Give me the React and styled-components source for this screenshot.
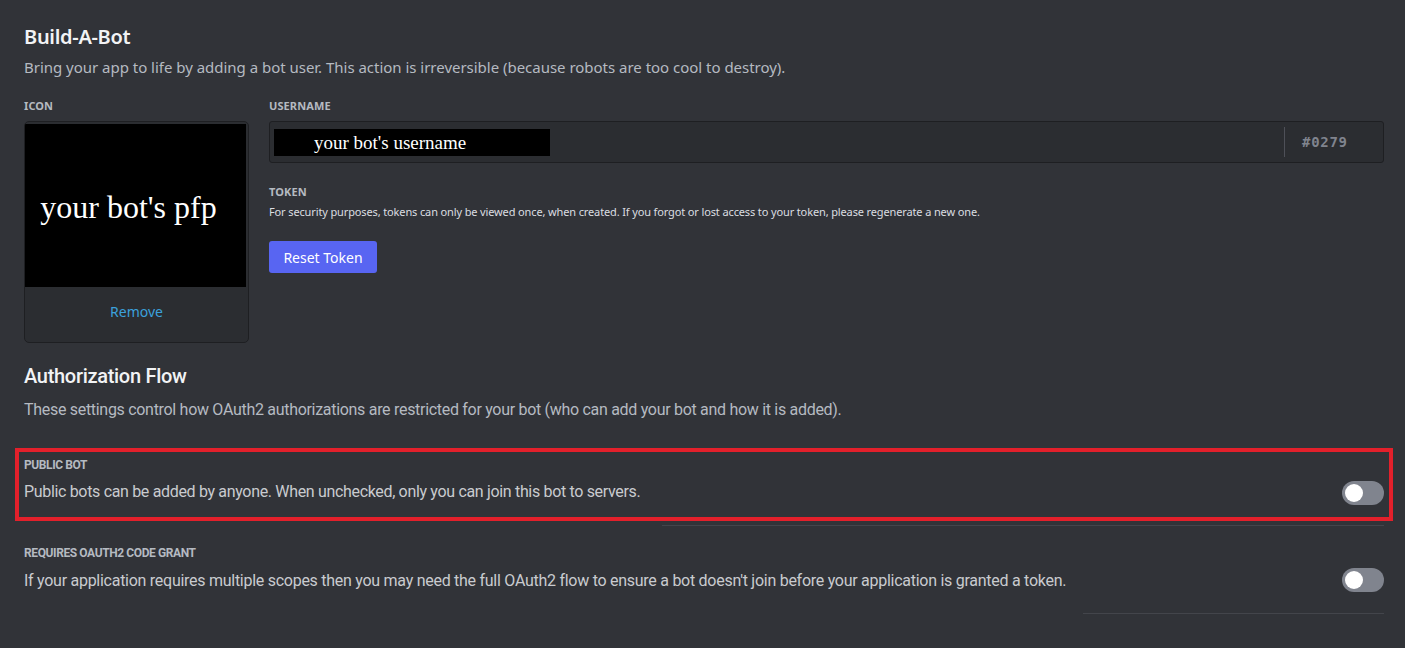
import React from "react";
import styled, { createGlobalStyle } from "styled-components";

const Global = createGlobalStyle`
  html, body { margin: 0; padding: 0; background: #313338; }
  body { font-family: "Noto Sans", sans-serif; -webkit-font-smoothing: antialiased; }
  #root { min-height: 648px; background: #313338; }
`;

const Page = styled.div`
  padding: 25px 21px 0 24px;
  color: #b5bac1;
  overflow: hidden;
  height: 648px;
  box-sizing: border-box;
`;

const Title = styled.h2`
  margin: 0;
  font-family: ${(p) => (p.$narrow ? `"Roboto", sans-serif` : `"Noto Sans", sans-serif`)};
  font-size: 20px;
  line-height: 24px;
  font-weight: ${(p) => (p.$narrow ? 500 : 600)};
  color: #f2f3f5;
  letter-spacing: -0.3px;
`;

const Sub = styled.p`
  margin: ${(p) => p.$m || "8px 0 0"};
  font-family: ${(p) => (p.$narrow ? `"Roboto", sans-serif` : `"Noto Sans", sans-serif`)};
  font-size: ${(p) => (p.$narrow ? "16px" : "15px")};
  line-height: 20px;
  color: #b5bac1;
  letter-spacing: ${(p) => (p.$narrow ? "-0.3px" : "-0.02px")};
`;

const Grid = styled.div`
  display: grid;
  grid-template-columns: 225px 1fr;
  column-gap: 20px;
  margin-top: 21px;
`;

const Col = styled.div`
  display: flex;
  flex-direction: column;
`;

const Label = styled.div`
  font-family: ${(p) => (p.$narrow ? `"Roboto", sans-serif` : `"Noto Sans", sans-serif`)};
  font-size: ${(p) => p.$size || "11px"};
  line-height: 16px;
  font-weight: 700;
  text-transform: uppercase;
  color: #b5bac1;
  letter-spacing: ${(p) => (p.$narrow ? "-0.4px" : "0.1px")};
  margin-top: ${(p) => p.$mt || "0"};
  margin-bottom: ${(p) => p.$mb || "7px"};
`;

const IconCard = styled.div`
  width: 225px;
  height: 222px;
  box-sizing: border-box;
  border: 1px solid #1e1f22;
  border-radius: 5px;
  background: #2b2d31;
  display: flex;
  flex-direction: column;
  overflow: hidden;
`;

const Pfp = styled.div`
  height: 163px;
  margin: 2px 2px 0 0;
  padding-right: 14px;
  padding-top: 4px;
  box-sizing: border-box;
  background: #000;
  display: flex;
  align-items: center;
  justify-content: center;
  font-family: "Liberation Serif", serif;
  font-size: 32px;
  color: #fff;
`;

const RemoveArea = styled.div`
  flex: 1;
  display: flex;
  align-items: center;
  justify-content: center;
  padding-bottom: 7px;
`;

const LinkText = styled.span`
  font-size: 14px;
  color: #3ba1dc;
`;

const InputBox = styled.div`
  height: 42px;
  box-sizing: border-box;
  border: 1px solid #1e1f22;
  border-radius: 3px;
  background: #2b2d31;
  display: flex;
  align-items: center;
`;

const InputField = styled.div`
  flex: 1;
  padding-left: 4px;
  display: flex;
  align-items: center;
`;

const NameMask = styled.div`
  width: 236px;
  height: 27px;
  background: #000;
  padding-left: 40px;
  font-family: "Liberation Serif", serif;
  font-size: 19px;
  line-height: 27px;
  color: #fff;
`;

const Discrim = styled.div`
  width: 99px;
  box-sizing: border-box;
  height: 30px;
  border-left: 1px solid #4e5058;
  display: flex;
  align-items: center;
  padding-left: 17px;
  font-family: "DejaVu Sans Mono", monospace;
  font-size: 14px;
  font-weight: 700;
  color: #80848e;
  letter-spacing: 0.7px;
`;

const Small = styled.p`
  margin: 0;
  font-size: 11px;
  line-height: 16px;
  color: #dbdee1;
  letter-spacing: -0.13px;
`;

const Button = styled.button`
  align-self: flex-start;
  margin-top: 21px;
  width: 108px;
  height: 32px;
  border: none;
  border-radius: 3px;
  background: #5865f2;
  color: #fff;
  font-family: "Noto Sans", sans-serif;
  font-size: 14px;
  font-weight: 400;
  cursor: pointer;
`;

const Section = styled.div`
  margin-top: ${(p) => p.$mt || "0"};
`;

const Highlight = styled.div`
  margin: 28px -9px 0 -9px;
  border: 4px solid #e3202b;
  padding: 5px 5px 4px;
`;

const SettingRow = styled.div`
  display: flex;
  align-items: flex-start;
  justify-content: space-between;
`;

const SettingText = styled.div`
  display: flex;
  flex-direction: column;
`;

const Desc = styled.div`
  font-family: "Roboto", sans-serif;
  font-size: 16px;
  line-height: 20px;
  color: #c9cbcf;
  letter-spacing: ${(p) => p.$ls || "-0.33px"};
`;

const Spacer = styled.div`
  height: ${(p) => p.$h};
`;

const Toggle = styled.div`
  width: 42px;
  height: 24px;
  border-radius: 12px;
  background: #80848e;
  position: relative;
  flex-shrink: 0;
  margin-top: ${(p) => p.$mt || "0"};
  &::after {
    content: "";
    position: absolute;
    left: 3px;
    top: 3px;
    width: 18px;
    height: 18px;
    border-radius: 50%;
    background: #fff;
  }
`;

const Divider = styled.div`
  height: 1px;
  background: #43454b;
  margin-left: ${(p) => p.$ml};
  margin-top: ${(p) => p.$mt};
`;

export default function App() {
  return (
    <>
      <Global />
      <Page>
        <Title>Build-A-Bot</Title>
        <Sub>
          Bring your app to life by adding a bot user. This action is irreversible (because robots are
          too cool to destroy).
        </Sub>
        <Grid>
          <Col>
            <Label>Icon</Label>
            <IconCard>
              <Pfp>your bot's pfp</Pfp>
              <RemoveArea>
                <LinkText>Remove</LinkText>
              </RemoveArea>
            </IconCard>
          </Col>
          <Col>
            <Label>Username</Label>
            <InputBox>
              <InputField>
                <NameMask>your bot's username</NameMask>
              </InputField>
              <Discrim>#0279</Discrim>
            </InputBox>
            <Label $mb="4px" $mt="21px">Token</Label>
            <Small>
              For security purposes, tokens can only be viewed once, when created. If you forgot or lost
              access to your token, please regenerate a new one.
            </Small>
            <Button>Reset Token</Button>
          </Col>
        </Grid>
        <Section $mt="21px">
          <Title $narrow>Authorization Flow</Title>
          <Sub $narrow $m="12px 0 0">
            These settings control how OAuth2 authorizations are restricted for your bot (who can add your
            bot and how it is added).
          </Sub>
        </Section>
        <Highlight>
          <SettingRow>
            <SettingText>
              <Label $narrow $size="12px" $mb="9px">Public Bot</Label>
              <Desc>Public bots can be added by anyone. When unchecked, only you can join this bot to servers.</Desc>
              <Spacer $h="11px" />
            </SettingText>
            <Toggle $mt="24px" />
          </SettingRow>
        </Highlight>
        <Divider $ml="638px" $mt="4px" />
        <Section $mt="19px">
          <SettingRow>
            <SettingText>
              <Label $narrow $size="12px" $mb="10px">Requires OAuth2 Code Grant</Label>
              <Desc $ls="-0.27px">
                If your application requires multiple scopes then you may need the full OAuth2 flow to ensure a
                bot doesn't join before your application is granted a token.
              </Desc>
            </SettingText>
            <Toggle $mt="23px" />
          </SettingRow>
          <Divider $ml="1059px" $mt="21px" />
        </Section>
      </Page>
    </>
  );
}
